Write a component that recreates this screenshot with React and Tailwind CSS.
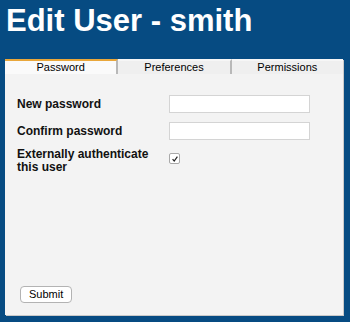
import { useState } from "react";

export default function App() {
  const [tab, setTab] = useState("Password");
  const [external, setExternal] = useState(true);
  const tabs = ["Password", "Preferences", "Permissions"];

  return (
    <div className="w-[350px] h-[322px] bg-[#064b82] px-[5px] pt-[3px] font-['Liberation_Sans',Arial,sans-serif] overflow-hidden">
      <h1 className="text-white font-bold text-[31px] leading-[36px] pl-[1px]">Edit User - smith</h1>

      <div className="mt-[20px] w-[338px] h-[256px] bg-[#f3f3f3] flex flex-col shadow-[1px_1px_0_#c9c9c9]">
        {/* tab strip */}
        <div className="flex h-[15px]">
          {tabs.map((t) => (
            <button
              key={t}
              onClick={() => setTab(t)}
              className={`flex-1 text-[11px] leading-[13px] text-black border-r-2 border-[#b8b8b8] last:border-r-0 ${
                tab === t
                  ? "bg-[#fafafa] border-t-2 border-t-[#e9a73b]"
                  : "bg-[#efefef] border-t-2 border-t-[#f6f6f6]"
              }`}
            >
              {t}
            </button>
          ))}
        </div>

        <div className="flex-1 flex flex-col px-[12px] pt-[21px] pb-[12px] text-[12px] font-bold text-[#111]">
          <div className="grid grid-cols-[152px_141px] gap-y-[9px] items-center">
            <label htmlFor="np" className="leading-[14px]">New password</label>
            <input id="np" type="password" className="h-[18px] bg-white border border-[#d4d4d4] outline-none" />
            <label htmlFor="cp" className="leading-[14px]">Confirm password</label>
            <input id="cp" type="password" className="h-[18px] bg-white border border-[#d4d4d4] outline-none" />
            <label htmlFor="ext" className="leading-[13px] -mt-[1px]">
              Externally authenticate
              <br />
              this user
            </label>
            <div className="self-start pt-[4px]">
              <button
                id="ext"
                onClick={() => setExternal(!external)}
                className="w-[11px] h-[11px] bg-white border border-[#a9a9a9] rounded-[2px] flex items-center justify-center"
              >
                {external && (
                  <svg viewBox="0 0 10 10" className="w-[8px] h-[8px]">
                    <path d="M2 5.2 L4 7.6 L8 2" fill="none" stroke="#222" strokeWidth="1.5" />
                  </svg>
                )}
              </button>
            </div>
          </div>

          <div className="mt-auto pl-[3px]">
            <button className="h-[17px] px-[8px] bg-white border border-[#b3b3b3] rounded-[4px] text-[11px] font-normal text-black leading-[14px]">
              Submit
            </button>
          </div>
        </div>
      </div>
    </div>
  );
}
